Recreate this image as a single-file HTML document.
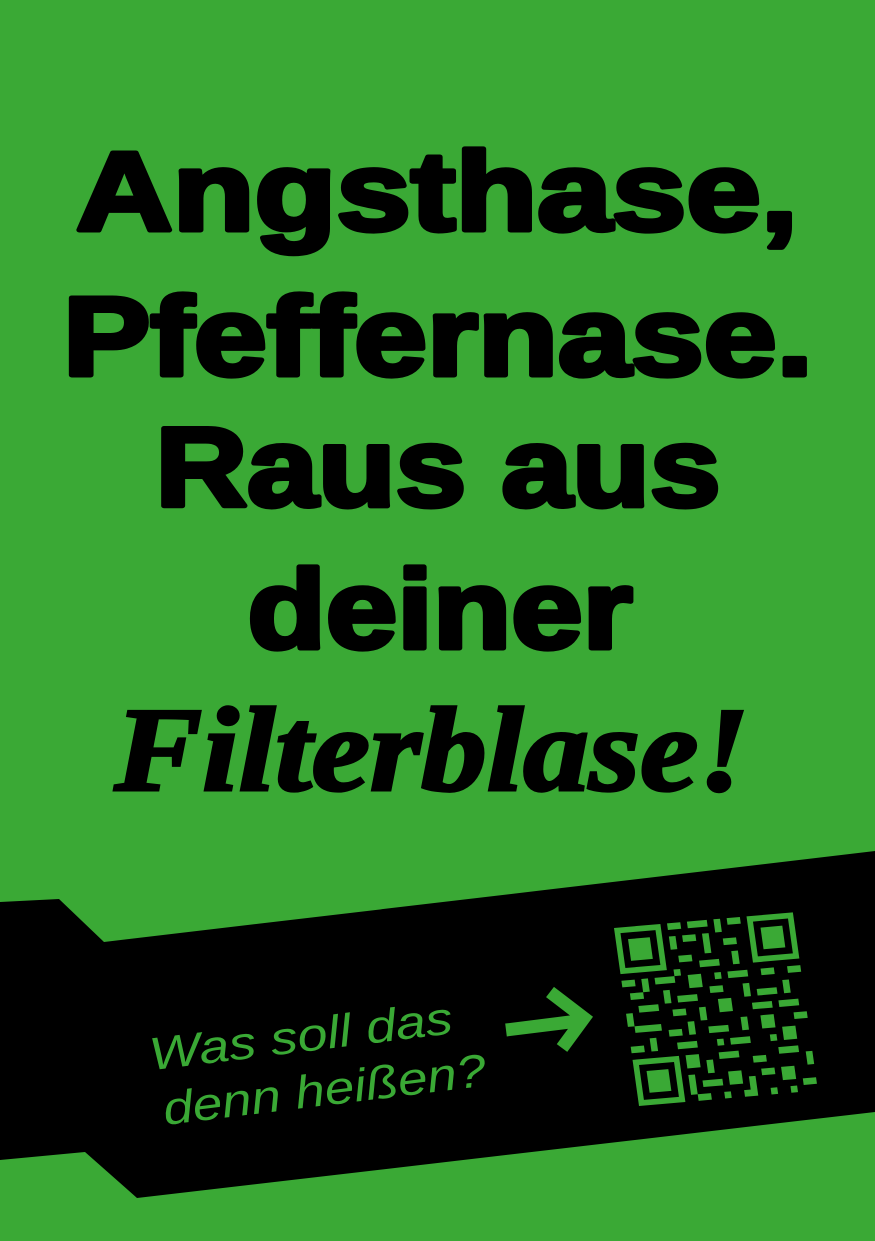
<!DOCTYPE html>
<html><head><meta charset="utf-8"><style>
html,body{margin:0;padding:0;width:875px;height:1241px;overflow:hidden;background:#3aa935}
</style></head><body>
<svg width="875" height="1241" viewBox="0 0 875 1241" xmlns="http://www.w3.org/2000/svg">
<rect width="875" height="1241" fill="#3aa935"/>
<g font-family="Liberation Sans, sans-serif" font-weight="bold" fill="#000" stroke="#000" stroke-width="5" stroke-linejoin="round" text-anchor="middle">
<text x="437" y="230" font-size="112" textLength="722" lengthAdjust="spacingAndGlyphs">Angsthase,</text>
<text x="438" y="375" font-size="112" textLength="750" lengthAdjust="spacingAndGlyphs">Pfeffernase.</text>
<text x="438" y="506" font-size="112" textLength="565" lengthAdjust="spacingAndGlyphs">Raus aus</text>
<text x="440" y="648" font-size="112" textLength="385" lengthAdjust="spacingAndGlyphs">deiner</text>
</g>
<text x="432" y="790" text-anchor="middle" font-family="Liberation Serif, serif" font-weight="bold" font-style="italic" font-size="120" textLength="635" lengthAdjust="spacingAndGlyphs" fill="#000" stroke="#000" stroke-width="3">Filterblase!</text>
<polygon points="0,902 59,899 104,942 875,851 875,1112 137,1198 85,1152 0,1160" fill="#000"/>
<g transform="rotate(-7 300 1050)" font-family="Liberation Sans, sans-serif" font-style="italic" font-size="46" fill="#3aa935">
<text x="150" y="1052" textLength="305" lengthAdjust="spacingAndGlyphs">Was soll das</text>
<text x="157" y="1108" textLength="325" lengthAdjust="spacingAndGlyphs">denn heißen?</text>
</g>
<path d="M506 1030 L578 1021 M550 992 L584 1018 L562 1048" stroke="#3aa935" stroke-width="13" fill="none" stroke-linejoin="miter"/>
<g transform="translate(614 928) rotate(-5) skewX(3) scale(0.95)" fill="#3aa935">
<g><rect x="0" y="0" width="49" height="49"/><rect x="6" y="6" width="37" height="37" fill="#000"/><rect x="13" y="13" width="23" height="23"/></g>
<g transform="translate(140 0)"><rect x="0" y="0" width="49" height="49"/><rect x="6" y="6" width="37" height="37" fill="#000"/><rect x="13" y="13" width="23" height="23"/></g>
<g transform="translate(0 140)"><rect x="0" y="0" width="49" height="49"/><rect x="6" y="6" width="37" height="37" fill="#000"/><rect x="13" y="13" width="23" height="23"/></g>
<path d="M56 0h14v7h-14zM77 0h21v7h-21zM105 0h7v14h-7zM119 0h14v7h-14zM56 14h7v14h-7zM70 14h14v7h-14zM91 14h7v21h-7zM112 21h14v7h-14zM63 35h14v7h-14zM84 42h21v7h-21zM119 35h7v14h-7zM56 49h7v7h-7z
M0 56h14v7h-14zM21 56h7v14h-7zM35 56h21v7h-21zM70 56h14v14h-14zM98 56h7v7h-7zM112 56h21v7h-21zM147 56h14v7h-14zM175 56h14v7h-14z
M7 70h14v7h-14zM42 70h7v14h-7zM56 77h21v7h-21zM91 70h14v7h-14zM126 70h7v14h-7zM140 77h21v7h-21zM168 70h7v14h-7z
M0 91h7v14h-7zM14 84h21v7h-21zM49 91h14v7h-14zM77 91h7v14h-7zM98 84h14v14h-14zM133 91h21v7h-21zM161 91h21v7h-21z
M7 105h28v7h-28zM42 112h14v7h-14zM63 105h7v14h-7zM84 112h21v7h-21zM119 105h7v14h-7zM140 105h14v14h-14zM175 105h14v7h-14z
M0 126h14v7h-14zM21 119h7v14h-7zM49 126h21v7h-21zM91 126h7v7h-7zM105 126h21v7h-21zM147 126h7v7h-7zM161 119h14v14h-14z
M56 140h14v14h-14zM77 147h7v14h-7zM91 140h21v7h-21zM126 147h14v7h-14zM154 140h21v7h-21zM182 147h7v14h-7z
M56 161h7v21h-7zM70 168h21v7h-21zM98 161h14v14h-14zM119 168h7v14h-7zM133 161h14v7h-14zM154 161h14v14h-14zM175 175h14v7h-14z
M63 182h14v7h-14zM91 182h7v7h-7zM112 182h14v7h-14zM140 182h7v7h-7zM161 182h7v7h-7z"/>
</g>
</svg>
</body></html>
